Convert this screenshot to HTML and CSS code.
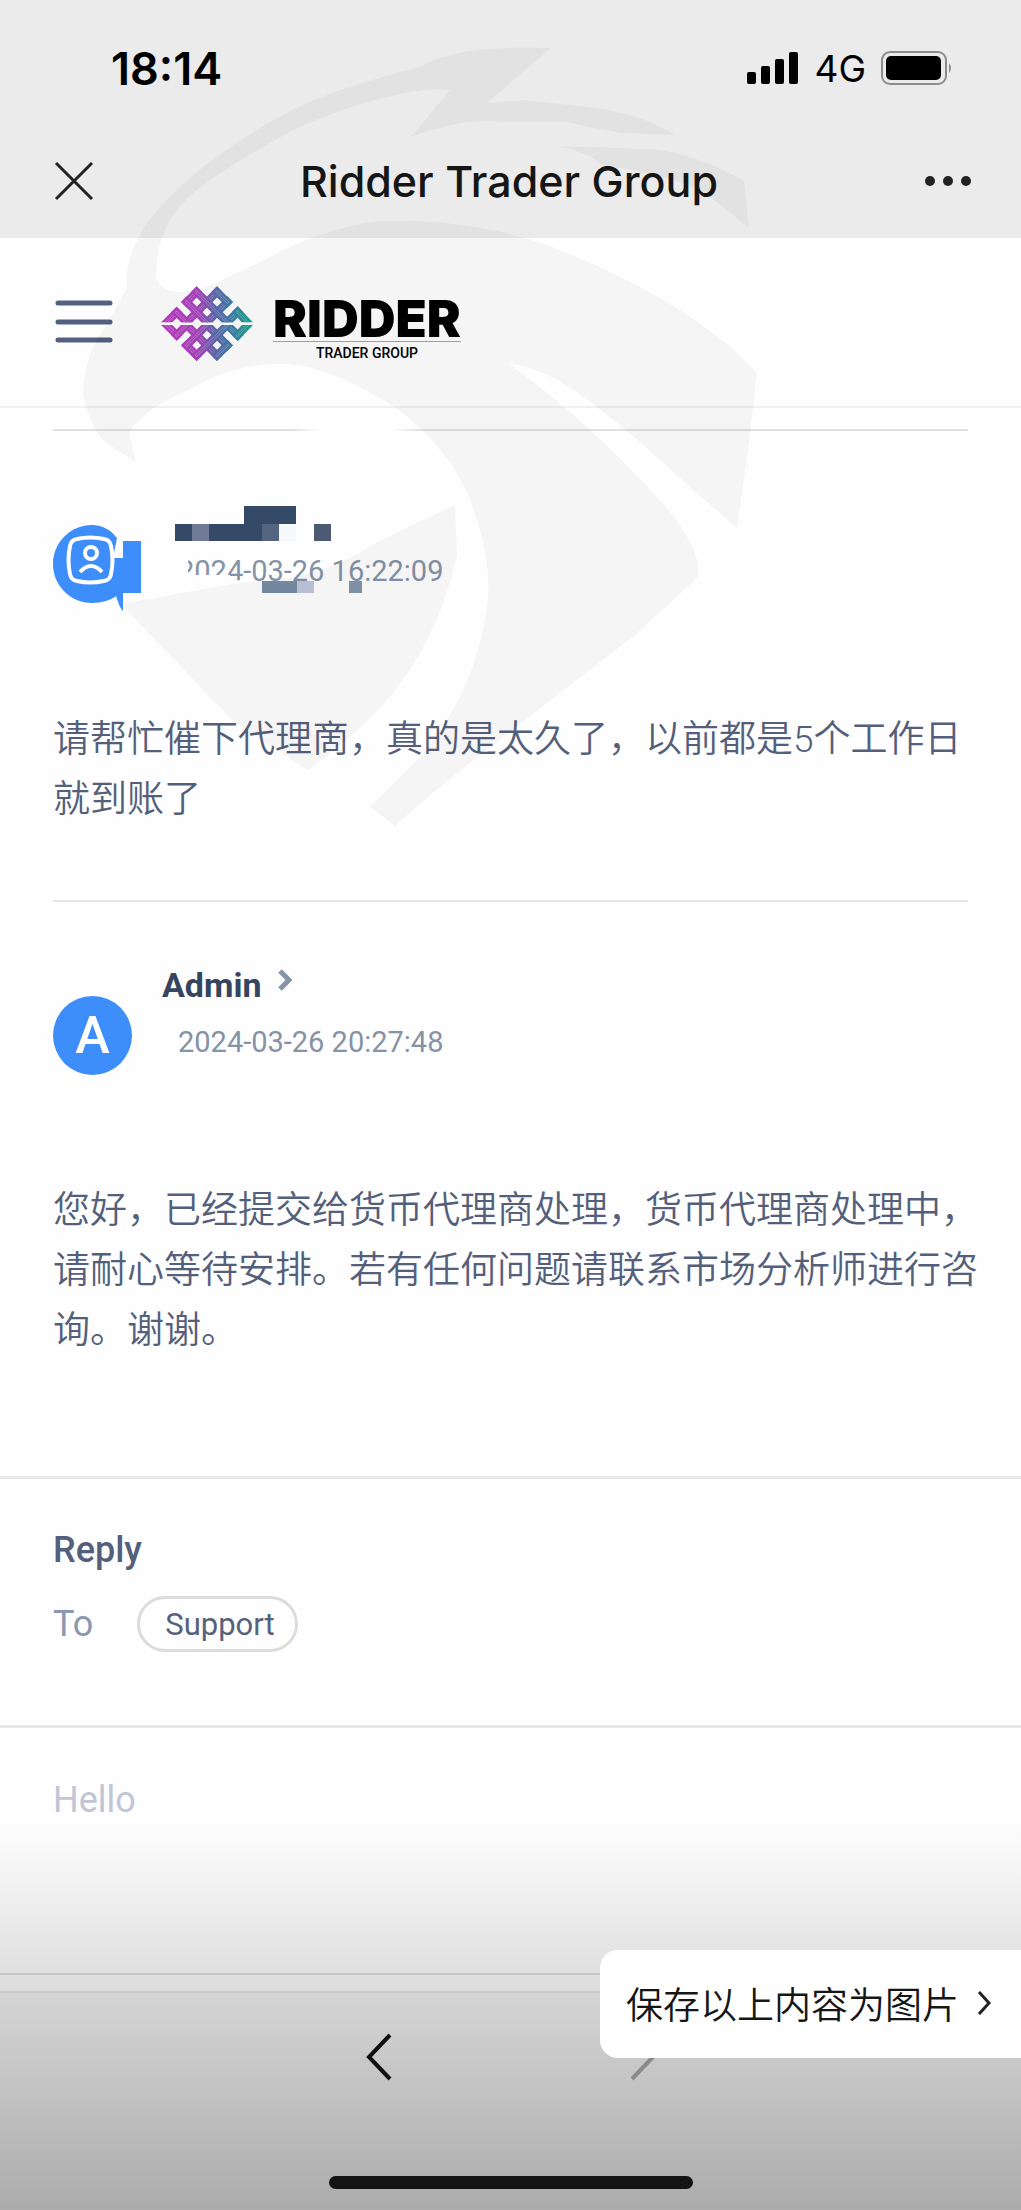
FILE: index.html
```html
<!DOCTYPE html>
<html lang="zh-CN">
<head>
    <meta charset="UTF-8">
    <meta name="viewport" content="width=device-width, initial-scale=1.0">
    <title>Ridder Trader Group</title>
    <link rel="stylesheet" href="styles.css">
</head>
<body>
    <div class="page">
        <!-- Phone status and browser title -->
        <header class="top">
            <div class="status-bar">
                <span class="time">18:14</span>
                <div class="status-icons">
                    <svg width="52" height="34" viewBox="0 0 52 34" aria-hidden="true">
                        <rect x="0" y="21" width="9" height="12" rx="2"/>
                        <rect x="14" y="15" width="9" height="18" rx="2"/>
                        <rect x="28" y="8" width="9" height="25" rx="2"/>
                        <rect x="42" y="1" width="9" height="32" rx="2"/>
                    </svg>
                    <span class="network">4G</span>
                    <svg width="72" height="34" viewBox="0 0 72 34" aria-hidden="true">
                        <rect x="1" y="1" width="64" height="32" rx="8" fill="none" stroke="#8c8c8c" stroke-width="2"/>
                        <rect x="5" y="5" width="55" height="24" rx="5"/>
                        <path d="M68 12q4 5 0 10z" fill="#8c8c8c"/>
                    </svg>
                </div>
            </div>
            <div class="title-bar">
                <button class="icon-btn" type="button" aria-label="Close">
                    <svg width="40" height="40" viewBox="0 0 40 40">
                        <path d="M2 2l36 36M38 2L2 38" fill="none" stroke="#222" stroke-width="3"/>
                    </svg>
                </button>
                <h1>Ridder Trader Group</h1>
                <button class="icon-btn" type="button" aria-label="More">
                    <svg width="48" height="40" viewBox="0 0 48 40" fill="#222">
                        <circle cx="6" cy="20" r="5"/>
                        <circle cx="24" cy="20" r="5"/>
                        <circle cx="42" cy="20" r="5"/>
                    </svg>
                </button>
            </div>
        </header>

        <!-- Site navigation -->
        <nav class="site-nav">
            <button class="icon-btn" type="button" aria-label="Menu">
                <svg width="58" height="44" viewBox="0 0 58 44">
                    <path d="M3 3h52M3 22h52M3 40h52" fill="none" stroke="#54607f" stroke-width="5" stroke-linecap="round"/>
                </svg>
            </button>
            <a class="logo" href="#" aria-label="Ridder Trader Group">
                <svg width="92" height="76" viewBox="65 49 276 228" aria-hidden="true">
                    <defs>
                        <linearGradient id="knot" gradientUnits="userSpaceOnUse" x1="68" y1="0" x2="336" y2="0">
                            <stop offset="0" stop-color="#c03cc4"/>
                            <stop offset="0.4" stop-color="#a844bd"/>
                            <stop offset="0.6" stop-color="#5c69ad"/>
                            <stop offset="0.78" stop-color="#3f7fa9"/>
                            <stop offset="1" stop-color="#15a58c"/>
                        </linearGradient>
                        <clipPath id="upper"><rect x="60" y="40" width="290" height="118"/></clipPath>
                        <path id="up" d="M76 164L112 128M142 97L172 67M136 164L233 67M197 164L264 97M258 164L295 127"/>
                        <path id="down" d="M112 128L148 164M142 97L209 164M172 67L270 164M233 67L264 97M295 127L330 164"/>
                        <g id="half" clip-path="url(#upper)" fill="none" stroke-linecap="square">
                            <use href="#up" stroke="url(#knot)" stroke-width="24"/>
                            <use href="#up" stroke="#fff" stroke-opacity="0.3" stroke-width="8"/>
                            <use href="#up" stroke="url(#knot)" stroke-width="4"/>
                            <use href="#down" stroke="url(#knot)" stroke-width="24"/>
                            <use href="#down" stroke="#fff" stroke-opacity="0.3" stroke-width="8"/>
                            <use href="#down" stroke="url(#knot)" stroke-width="4"/>
                        </g>
                    </defs>
                    <use href="#half"/>
                    <use href="#half" transform="matrix(1 0 0 -1 0 324)"/>
                </svg>
                <span class="logo-text">
                    <strong>RIDDER</strong>
                    <small>TRADER GROUP</small>
                </span>
            </a>
        </nav>

        <!-- Ticket messages -->
        <main>
            <article class="message faded">
                <div class="message-head">
                    <svg class="avatar-shape" width="90" height="92" viewBox="0 0 90 92" aria-hidden="true">
                        <path d="M39 0C18 0 0 17 0 39s18 39 39 39c10 0 19-3 24-7 2 6 4 12 7 15V68h18V16H70v17H60l4-20C58 5 49 0 39 0z" fill="#3d8dfb"/>
                        <path d="M24 14q13-3 27 0 6 1 7 7 3 14 0 28-1 6-7 7-14 3-27 0-6-1-7-7-3-14 0-28 1-6 7-7z" fill="none" stroke="#fff" stroke-width="4"/>
                        <circle cx="38" cy="28" r="6" fill="none" stroke="#fff" stroke-width="4"/>
                        <path d="M27 47q11-12 22 0" fill="none" stroke="#fff" stroke-width="4"/>
                    </svg>
                    <div class="sender">
                        <div class="name"></div>
                        <time class="date">2024-03-26 16:22:09</time>
                    </div>
                    <!-- Blocks that hide the sender -->
                    <svg class="mosaic" width="200" height="90" viewBox="0 0 200 90" aria-hidden="true">
                        <path d="M12 50h14v16l6 3h36v5l32 1v5H12z" fill="#fefefe"/>
                        <path d="M82 0h52v18h-17v17H13V18h69z" fill="#354a66"/>
                        <path d="M30 18h17v17H30z" fill="#6f7b97"/>
                        <path d="M100 18h17v17h-17z" fill="#54657f"/>
                        <path d="M117 18h17v17h-17z" fill="#f7f9fd"/>
                        <path d="M152 18h17v17h-17z" fill="#4c5b71"/>
                        <path d="M100 75h35v12h-35z" fill="#788ca4"/>
                        <path d="M135 75h17v12h-17z" fill="#c0c5da"/>
                        <path d="M187 75h13v12h-13z" fill="#8495ab"/>
                    </svg>
                </div>
                <p>请帮忙催下代理啇，真的是太久了，以前都是5个工作日就到账了</p>
            </article>

            <article class="message">
                <div class="message-head">
                    <div class="avatar">A</div>
                    <div class="sender">
                        <div class="name">
                            Admin
                            <svg width="15" height="22" viewBox="0 0 15 22" aria-hidden="true">
                                <path d="M3 2l9 9-9 9" fill="none" stroke="#8594a9" stroke-width="5"/>
                            </svg>
                        </div>
                        <time class="date">2024-03-26 20:27:48</time>
                    </div>
                </div>
                <p>您好，已经提交给货币代理商处理，货币代理商处理中，请耐心等待安排。若有任何问题请联系市场分析师进行咨询。谢谢。</p>
            </article>
        </main>

        <!-- Reply form -->
        <form class="reply">
            <div class="reply-head">
                <h2>Reply</h2>
                <div class="reply-to">
                    <span>To</span>
                    <button class="pill" type="button">Support</button>
                </div>
            </div>
            <textarea class="reply-text" aria-label="Reply" placeholder="Hello"></textarea>
        </form>

        <!-- Browser toolbar -->
        <footer class="toolbar">
            <div class="toolbar-buttons">
                <button class="icon-btn" type="button" aria-label="Back">
                    <svg width="28" height="48" viewBox="0 0 28 48">
                        <path d="M25 2L4 24l21 22" fill="none" stroke="#111" stroke-width="4"/>
                    </svg>
                </button>
                <button class="icon-btn" type="button" aria-label="Forward">
                    <svg width="28" height="48" viewBox="0 0 28 48">
                        <path d="M3 2l21 22L3 46" fill="none" stroke="#8a8a8a" stroke-width="4"/>
                    </svg>
                </button>
            </div>
            <div class="home-bar"></div>
        </footer>

        <div class="shade"></div>

        <button class="save-btn" type="button">
            保存以上内容为图片
            <svg width="15" height="26" viewBox="0 0 15 26" aria-hidden="true">
                <path d="M2 2l10 11L2 24" fill="none" stroke="#222" stroke-width="3"/>
            </svg>
        </button>

        <!-- Eagle watermark -->
        <svg class="watermark" width="760" height="840" viewBox="0 0 760 840" aria-hidden="true">
            <path d="M551 48Q455 44 418 68Q340 86 290 111Q190 165 147 223Q124 258 127 288L106 325Q84 355 83 395Q92 432 106 443L136 462L129 432Q145 408 189 390Q234 362 290 364Q340 370 400 411Q450 450 470 500Q493 560 487 609Q475 690 423 754L370 807L395 826Q440 785 496 743L565 689L634 636L698 577Q702 550 666 507Q590 422 508 363Q545 368 588 400Q640 440 694 491L737 528Q750 440 757 373Q690 300 547 245Q470 218 377 221Q317 230 262 261L211 285Q165 302 156 277Q156 230 184 202Q210 175 299 127Q400 85 450 90L411 137Q460 118 501 122H565L620 133L675 135Q640 112 580 106L524 100L487 103Z"/>
            <path d="M558 146Q590 153 602 165Q690 178 717 202L749 228L744 181Q700 155 652 149Z"/>
            <path d="M455 505Q400 530 372 545Q320 580 244 582L120 604Q165 650 234 722L308 770Q370 725 400 684Q440 630 457 556Z"/>
        </svg>
    </div>
</body>
</html>
```
FILE: styles.css
```css
* {
    box-sizing: border-box;
}
body {
    margin: 0;
    background: #fefefe;
    font-family: Roboto, "Noto Sans CJK SC", sans-serif;
    color: #54607b;
}
.page {
    position: relative;
    display: flex;
    flex-direction: column;
    min-height: 100vh;
    overflow: hidden;
}
h1, h2, p {
    margin: 0;
}
button {
    font-family: inherit;
    cursor: pointer;
}
svg {
    display: block;
    flex: none;
}
.icon-btn {
    padding: 0;
    border: 0;
    background: none;
}

/* Status and title */
.top {
    height: 238px;
    background: #ebebeb;
    font-family: Inter, "Noto Sans CJK SC", sans-serif;
    color: #000;
}
.status-bar {
    display: flex;
    justify-content: space-between;
    align-items: center;
    height: 136px;
    padding: 0 68px 0 111px;
}
.time {
    font-size: 45px;
    font-weight: 600;
}
.status-icons {
    display: flex;
    align-items: center;
    gap: 15px;
}
.network {
    font-size: 37px;
}
.title-bar {
    display: flex;
    justify-content: space-between;
    align-items: center;
    height: 90px;
    padding: 0 49px 0 54px;
}
h1 {
    font-size: 43px;
    font-weight: 500;
    color: #161616;
}

/* Navigation */
.site-nav {
    display: flex;
    align-items: center;
    gap: 48px;
    height: 170px;
    padding: 0 55px;
    border-bottom: 2px solid #f1f1f1;
}
.logo {
    display: flex;
    align-items: center;
    gap: 20px;
    padding-top: 4px;
    color: #000;
    text-decoration: none;
}
.logo-text {
    display: flex;
    flex-direction: column;
    padding-top: 12px;
    text-align: center;
}
.logo-text strong {
    border-bottom: 1px solid #a5a5a5;
    font-family: Inter, sans-serif;
    font-size: 51px;
    font-weight: 900;
    line-height: 44px;
}
.logo-text small {
    font-size: 14px;
    font-weight: 500;
    line-height: 22px;
}

/* Messages */
main {
    padding-top: 21px;
}
.message {
    height: 471px;
    padding: 0 42px 0 53px;
}
.message + .message {
    height: auto;
    padding-bottom: 115px;
}
.message::before {
    content: "";
    display: block;
    height: 2px;
    margin-right: 11px;
    background: #e4e4e5;
}
.faded::before {
    background: linear-gradient(to right, #e0e0e0 26%, transparent 29%, transparent 37%, #e0e0e0 40%);
}
.message-head {
    position: relative;
    display: flex;
    gap: 30px;
    height: 279px;
    padding-top: 60px;
}
.avatar,
.avatar-shape {
    margin-top: 34px;
}
.avatar-shape {
    margin-right: -11px;
}
.avatar {
    width: 79px;
    height: 79px;
    border-radius: 50%;
    background: #3d8dfb;
    color: #fff;
    font-size: 52px;
    font-weight: 500;
    line-height: 79px;
    text-align: center;
}
.name {
    display: flex;
    gap: 15px;
    height: 58px;
    font-size: 34px;
    font-weight: 700;
    line-height: 46px;
    color: #35455f;
}
.name svg {
    margin-top: 7px;
}
.date {
    display: block;
    padding-left: 16px;
    font-size: 29px;
    line-height: 44px;
    color: #8593a6;
}
.mosaic {
    position: absolute;
    top: 75px;
    left: 109px;
}
.message p {
    font-size: 37px;
    font-weight: 350;
    line-height: 60px;
}

/* Reply */
.reply-head {
    height: 249px;
    padding: 44px 53px 0;
    border-top: 3px solid #e9e9e9;
}
h2 {
    font-size: 36px;
    font-weight: 500;
    line-height: 54px;
    color: #54607b;
}
.reply-to {
    display: flex;
    align-items: center;
    gap: 44px;
    margin-top: 19px;
    font-size: 36px;
    color: #8b96b0;
}
.pill {
    height: 56px;
    padding: 0 20px 0 25px;
    border: 3px solid #dcdcdc;
    border-radius: 28px;
    background: none;
    color: #56627c;
    font-size: 31px;
}
.reply-text {
    display: block;
    width: 100%;
    height: 250px;
    padding: 48px 53px;
    border: 0;
    border-top: 3px solid #e9e9e9;
    border-bottom: 2px solid #e0e0e0;
    background: none;
    font-family: inherit;
    font-size: 36px;
    line-height: 48px;
    resize: none;
}
.reply-text::placeholder {
    color: #c1c5d6;
}

/* Toolbar */
.toolbar {
    display: flex;
    flex: 1;
    flex-direction: column;
    justify-content: space-between;
    align-items: center;
    margin-top: 16px;
    padding: 40px 0 21px;
    border-top: 2px solid #e9e9e9;
    background: #f6f6f6;
}
.toolbar-buttons {
    display: flex;
    gap: 236px;
}
.home-bar {
    width: 364px;
    height: 13px;
    border-radius: 7px;
    background: #141414;
}
.shade {
    position: absolute;
    right: 0;
    bottom: 0;
    left: 0;
    height: 390px;
    background: linear-gradient(rgba(0, 0, 0, 0), rgba(0, 0, 0, 0.3));
    pointer-events: none;
}
.toolbar-buttons, .home-bar {
    position: relative;
    z-index: 1;
}
.save-btn {
    position: absolute;
    right: 0;
    bottom: 152px;
    z-index: 2;
    display: flex;
    align-items: center;
    gap: 18px;
    height: 108px;
    padding: 0 29px 2px 26px;
    border: 0;
    border-radius: 18px 0 0 18px;
    background: #fff;
    color: #161616;
    font-size: 37px;
    font-weight: 350;
}
.watermark {
    position: absolute;
    top: 0;
    left: 0;
    fill: rgba(0, 0, 0, 0.035);
    pointer-events: none;
}
```
